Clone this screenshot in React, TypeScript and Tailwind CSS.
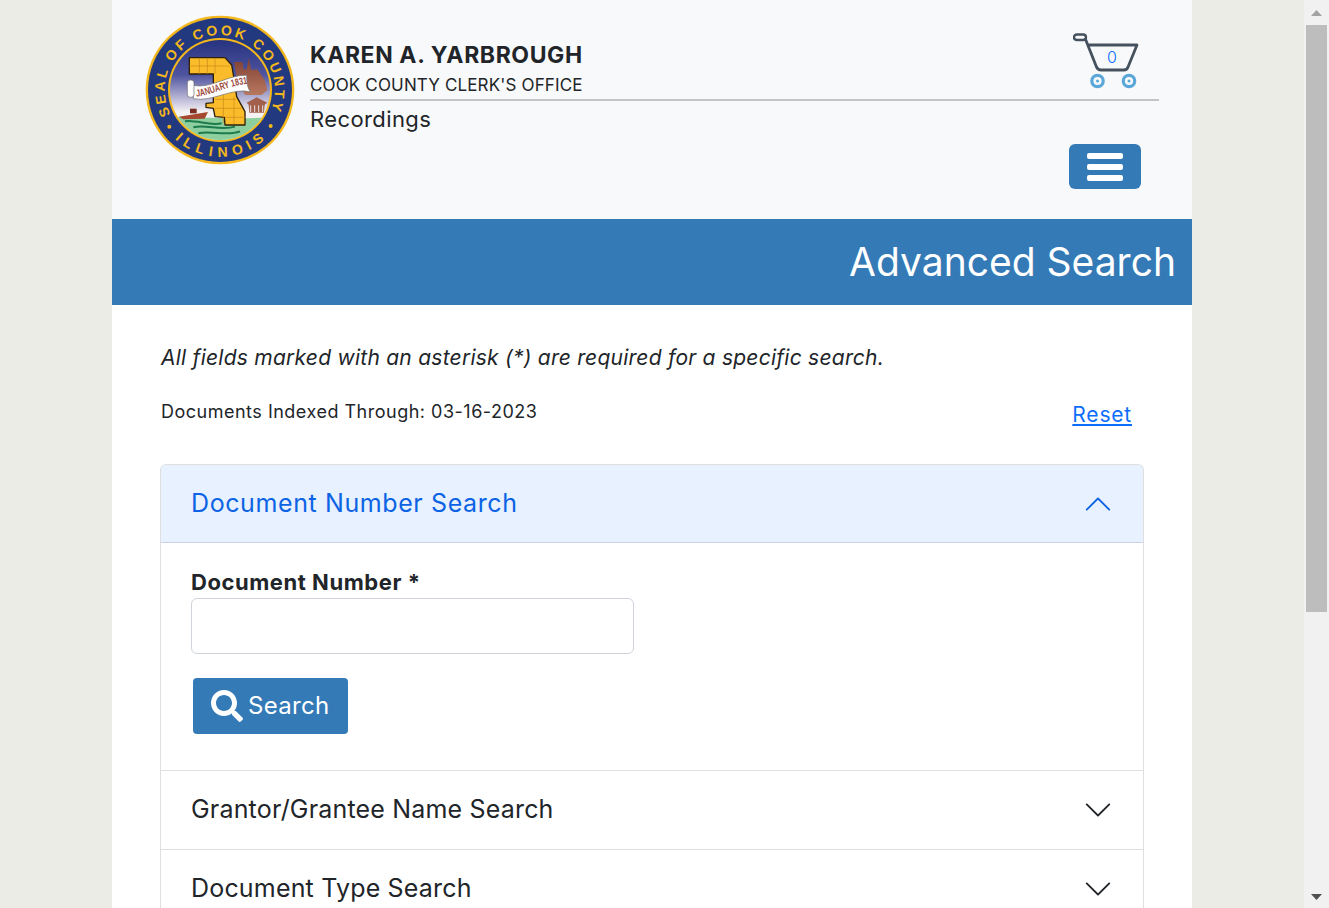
import { FaSearch } from "react-icons/fa";

function Seal() {
  return (
    <svg viewBox="45 45 450 450" className="h-[150px] w-[150px] shrink-0">
      <defs>
        <linearGradient id="sky" x1="0" y1="0" x2="0" y2="1">
          <stop offset="0" stopColor="#26337f" />
          <stop offset="0.35" stopColor="#4f549f" />
          <stop offset="0.62" stopColor="#c9c6de" />
          <stop offset="0.72" stopColor="#f4f2f2" />
        </linearGradient>
        <linearGradient id="city" x1="0" y1="0" x2="0" y2="1">
          <stop offset="0" stopColor="#7d3f34" />
          <stop offset="1" stopColor="#b9785e" />
        </linearGradient>
        <clipPath id="inner">
          <circle cx="270" cy="270" r="150" />
        </clipPath>
        <path id="arcTop" d="M 122 344 A 165 165 0 1 1 422 333" />
        <path id="arcBottom" d="M 134 417 A 200 200 0 0 0 406 417" />
        <path id="bannerLine" d="M200 290 C 240 287 290 258 358 250" />
      </defs>
      <circle cx="270" cy="270" r="223" fill="#f5b81c" />
      <circle cx="270" cy="270" r="216" fill="#22397f" />
      <circle cx="270" cy="270" r="156" fill="#f5b81c" />
      <circle cx="270" cy="270" r="150" fill="url(#sky)" />
      <g clipPath="url(#inner)">
        <path d="M312 186 L338 186 L340 208 L350 208 L356 174 L364 210 L382 208 L404 240 L412 270 L395 285 L345 285 L320 230 Z" fill="url(#city)" />
        <path d="M350 308 L380 292 L412 308 L404 314 L402 338 L358 338 L356 314 Z" fill="#a2604c" />
        <path d="M362 316 V336 M374 316 V336 M386 316 V336 M398 316 V336" stroke="#e8e2e0" strokeWidth="3" />
        <path d="M100 354 C190 347 300 362 440 350 L440 440 L100 440 Z" fill="#8ecfa0" />
        <path d="M165 364 C200 358 240 380 275 370 M190 382 C230 372 270 394 315 380 M205 400 C240 390 290 410 330 394" fill="none" stroke="#1c7a4c" strokeWidth="6" />
        <path d="M146 350 L234 336 L224 356 L160 358 Z" fill="#a5482f" />
        <rect x="180" y="326" width="20" height="14" fill="#7a2d22" />
      </g>
      <path d="M178 173 L285 173 L305 195 L312 235 L320 290 L345 335 L345 375 L285 375 L283 352 L255 350 L250 325 L228 322 L228 310 L250 308 L250 222 L178 222 Z" fill="#fbbc2c" stroke="#2d2008" strokeWidth="4" strokeLinejoin="round" />
      <path d="M208 175 V222 M232 175 V222 M255 175 V222 M178 198 H300 M280 275 V370 M312 290 V372 M255 298 H318 M255 325 H335 M285 352 H345" stroke="#c98a1a" strokeWidth="2" fill="none" />
      <path d="M190 256 C240 268 300 222 350 226 C350 245 352 265 362 276 C310 260 245 308 190 296 Z" fill="#ffffff" stroke="#6b6b6b" strokeWidth="2" />
      <rect x="172" y="240" width="20" height="52" rx="9" fill="#ffffff" stroke="#6b6b6b" strokeWidth="2" />
      <text fontFamily="'Liberation Sans', sans-serif" fontWeight="700" fontSize="30" fill="#9c4a3c">
        <textPath href="#bannerLine" textLength="158" lengthAdjust="spacingAndGlyphs">JANUARY 1831</textPath>
      </text>
      <g fontFamily="'Liberation Sans', sans-serif" fontWeight="700" fontSize="42" fill="#f5b81c">
        <text>
          <textPath href="#arcTop" textLength="655" lengthAdjust="spacing">SEAL OF COOK COUNTY</textPath>
        </text>
        <text>
          <textPath href="#arcBottom" textLength="296" lengthAdjust="spacing">ILLINOIS</textPath>
        </text>
      </g>
      <circle cx="118" cy="380" r="6" fill="#f5b81c" />
      <circle cx="422" cy="378" r="6" fill="#f5b81c" />
    </svg>
  );
}

function Cart() {
  return (
    <div className="relative h-[58px] w-[67px]">
      <svg viewBox="0 0 67 58" className="h-[58px] w-[67px]">
        <path d="M4 1.5 H10 C14 1.5 14 7 10 7 H4 C0 7 0 1.5 4 1.5 Z" fill="none" stroke="#45525e" strokeWidth="2.4" />
        <path d="M12 5 L23.5 34 Q25 37 28 37 H51 Q54 37 55 34 L64 12 H15.5" fill="none" stroke="#45525e" strokeWidth="2.8" strokeLinejoin="round" />
        <circle cx="24.5" cy="48" r="5.7" fill="none" stroke="#5ba7da" strokeWidth="3.2" />
        <circle cx="24.5" cy="48" r="1.5" fill="#5ba7da" />
        <circle cx="56" cy="48" r="5.7" fill="none" stroke="#5ba7da" strokeWidth="3.2" />
        <circle cx="56" cy="48" r="1.5" fill="#5ba7da" />
      </svg>
      <span className="absolute left-[34px] top-[14px] text-[16px] font-light leading-5 text-[#0d6efd]">0</span>
    </div>
  );
}

function Chevron({ up, color }: { up?: boolean; color: string }) {
  return (
    <svg viewBox="0 0 16 16" fill={color} className={`h-[30px] w-[30px] shrink-0 ${up ? "rotate-180" : ""}`}>
      <path fillRule="evenodd" d="M1.646 4.646a.5.5 0 0 1 .708 0L8 10.293l5.646-5.647a.5.5 0 0 1 .708.708l-6 6a.5.5 0 0 1-.708 0l-6-6a.5.5 0 0 1 0-.708z" />
    </svg>
  );
}

function AccordionRow({ title }: { title: string }) {
  return (
    <div className="flex h-[79px] items-center justify-between border-t border-[#dfdfdf] pl-[30px] pr-[30px] text-[25px] tracking-[0.18px] text-[#212529]">
      {title}
      <Chevron color="#212529" />
    </div>
  );
}

export default function App() {
  return (
    <div className="flex h-[908px] overflow-hidden bg-[#ebece6] font-['Inter','Liberation_Sans',sans-serif] text-[#212529]">
      <div className="h-[908px] flex-1 overflow-hidden">
        <div className="mx-auto w-[1080px] bg-white">
          <header className="flex h-[219px] bg-[#f8f9fa] pl-[33px] pr-[33px] pt-[15px]">
            <Seal />
            <div className="ml-[15px] flex-1">
              <div className="flex h-[86px] items-start justify-between border-b-2 border-[#c4c4c4] pr-[19px] pt-[18px]">
                <div className="pt-[8px]">
                  <div className="text-[23px] font-bold leading-[28px] tracking-[0.6px] text-[#212529]">KAREN A. YARBROUGH</div>
                  <div className="mt-[4px] text-[17px] leading-[24px] tracking-[0.15px]">COOK COUNTY CLERK'S OFFICE</div>
                </div>
                <Cart />
              </div>
              <div className="flex items-start justify-between pr-[18px]">
                <div className="mt-[4px] text-[22px] leading-[28px] tracking-[0.4px]">Recordings</div>
                <button className="mt-[43px] flex h-[45px] w-[72px] flex-col items-center justify-center gap-[5px] rounded-[6px] bg-[#337ab7]">
                  <span className="h-[6px] w-[36px] rounded-[2px] bg-white" />
                  <span className="h-[6px] w-[36px] rounded-[2px] bg-white" />
                  <span className="h-[6px] w-[36px] rounded-[2px] bg-white" />
                </button>
              </div>
            </div>
          </header>
          <div className="flex h-[86px] items-center justify-end bg-[#337ab7] pr-[16px] text-[39px] text-white">Advanced Search</div>
          <main className="px-[48px] pt-[39px]">
            <p className="pl-px text-[21px] italic leading-[28px] tracking-[0.25px]">All fields marked with an asterisk (*) are required for a specific search.</p>
            <div className="mt-[26px] flex items-start justify-between pr-[12px]">
              <span className="pl-px text-[18px] leading-[27px] tracking-[0.5px]">Documents Indexed Through: 03-16-2023</span>
              <a className="mt-[3px] text-[21px] leading-[28px] tracking-[0.8px] text-[#0d6efd] underline">Reset</a>
            </div>
            <div className="mt-[35px] rounded-t-[6px] border border-b-0 border-[#dfdfdf]">
              <div className="flex h-[78px] items-center justify-between rounded-t-[5px] bg-[#e7f1ff] px-[30px] text-[25px] tracking-[0.6px] text-[#0c63e4] shadow-[inset_0_-1px_0_#c9d3e2]">
                Document Number Search
                <Chevron up color="#0c63e4" />
              </div>
              <div className="h-[227px] pl-[30px] pt-[25px]">
                <label className="mb-[2px] block text-[22px] font-bold leading-[28px] tracking-[0.55px]">Document Number *</label>
                <input className="block h-[56px] w-[443px] rounded-[6px] border border-[#ced4da] bg-white" />
                <button className="ml-[2px] mt-[24px] flex h-[56px] w-[155px] items-center gap-[5px] rounded-[4px] bg-[#337ab7] pl-[18px] text-[24px] tracking-[0.3px] text-white">
                  <FaSearch className="h-[32px] w-[32px]" />
                  Search
                </button>
              </div>
              <AccordionRow title="Grantor/Grantee Name Search" />
              <AccordionRow title="Document Type Search" />
            </div>
          </main>
        </div>
      </div>
      <div className="flex h-[908px] w-[25px] flex-col bg-[#f1f1f1] pl-[2px] pr-[2px]">
        <div className="flex h-[25px] items-center justify-center">
          <svg viewBox="0 0 11 6" className="h-[6px] w-[11px]"><path d="M5.5 0 L11 6 H0 Z" fill="#a3a3a3" /></svg>
        </div>
        <div className="h-[587px] bg-[#bdbdbd]" />
        <div className="flex flex-1 items-end justify-center pb-[8px]">
          <svg viewBox="0 0 11 6" className="h-[6px] w-[11px]"><path d="M0 0 H11 L5.5 6 Z" fill="#505050" /></svg>
        </div>
      </div>
    </div>
  );
}
